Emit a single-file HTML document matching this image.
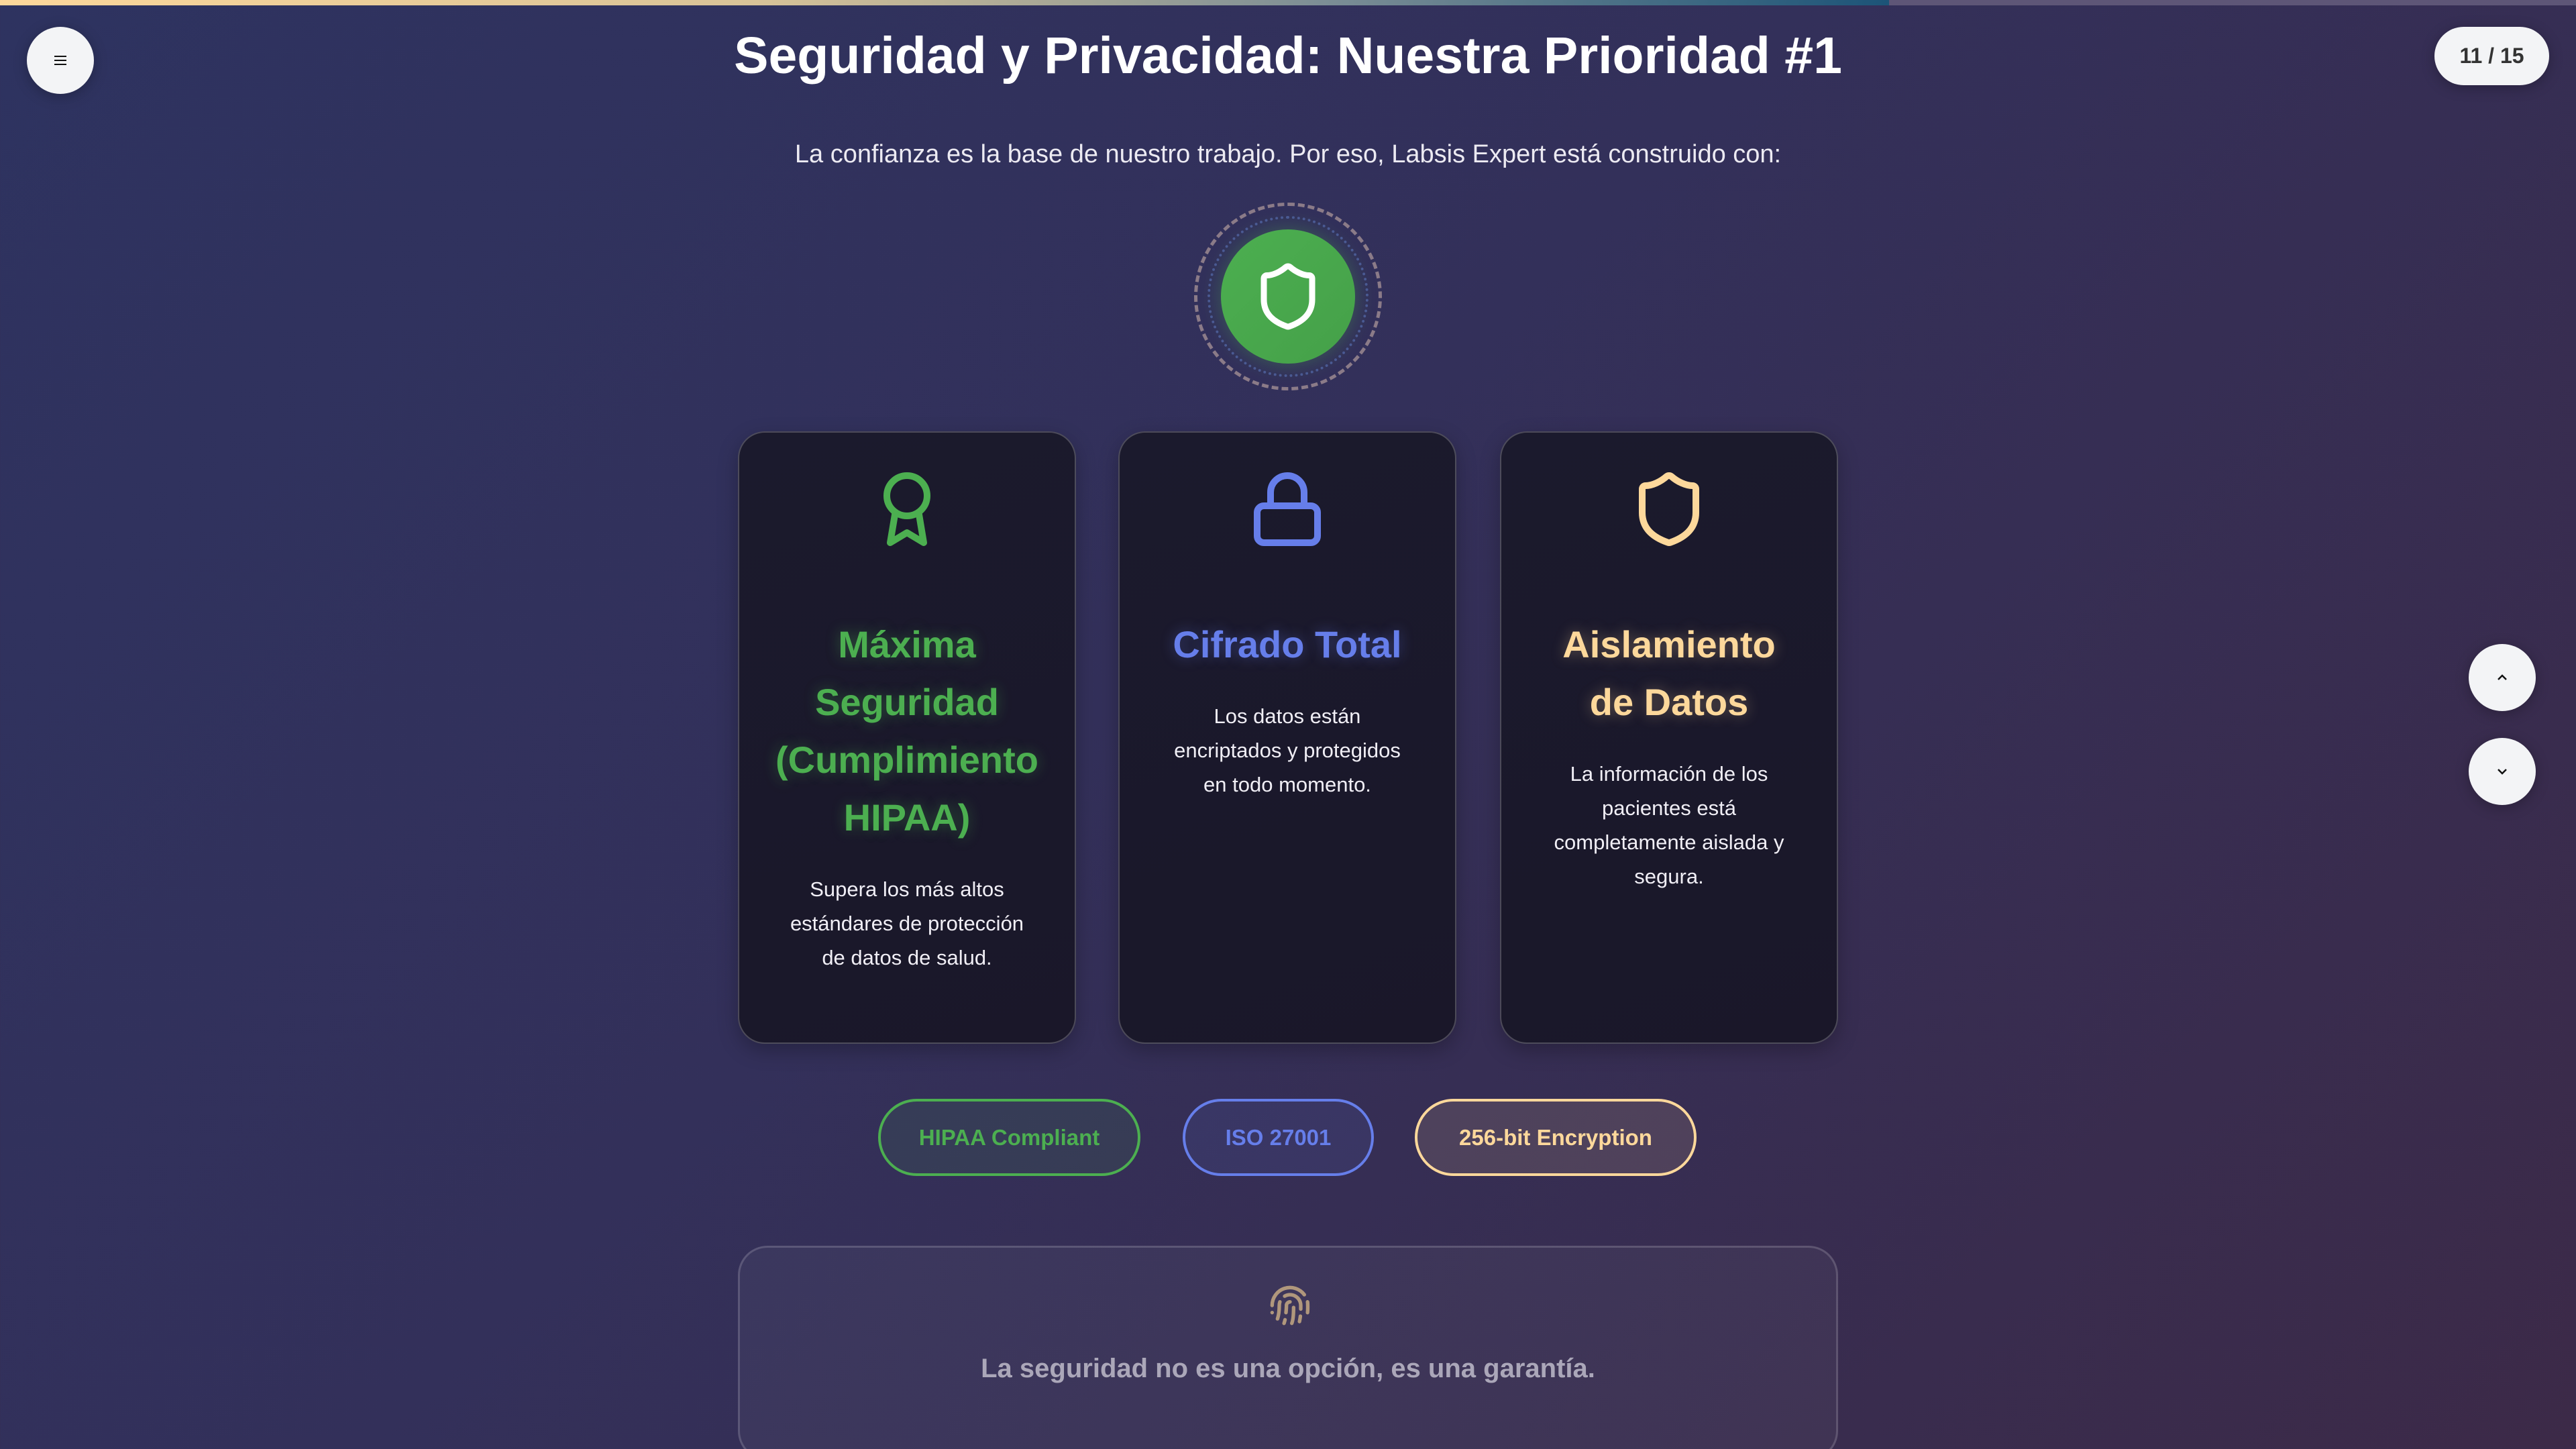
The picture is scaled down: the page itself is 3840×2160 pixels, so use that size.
<!DOCTYPE html>
<html><head><meta charset="utf-8"><style>
*{margin:0;padding:0;box-sizing:border-box}
html,body{width:3840px;height:2160px;overflow:hidden}
body{background:linear-gradient(135deg,#2e3360 0%,#33305a 45%,#3c2a48 100%);font-family:"Liberation Sans",sans-serif;position:relative;color:#fff}
.track{position:absolute;left:0;top:0;width:3840px;height:8px;background:#5e5677}
.bar{position:absolute;left:0;top:0;width:2816px;height:8px;background:linear-gradient(90deg,#fdd89b 0%,#d8c398 40%,#7c8e95 70%,#1c5478 100%)}
.menu{position:absolute;left:40px;top:40px;width:100px;height:100px;border-radius:50%;background:#f3f4f6;box-shadow:0 4px 20px rgba(0,0,0,.25);display:flex;align-items:center;justify-content:center}
.menu i{display:block;width:18px;height:14px;border-top:2px solid #111;border-bottom:2px solid #111;position:relative}
.menu i:after{content:"";position:absolute;left:0;right:0;top:4px;border-top:2px solid #111}
.count{position:absolute;left:3629px;top:40px;width:171px;height:87px;border-radius:44px;background:#f3f4f6;color:#333;font-size:32px;font-weight:bold;display:flex;align-items:center;justify-content:center;box-shadow:0 4px 20px rgba(0,0,0,.25)}
.nav{position:absolute;left:3680px;width:100px;height:100px;border-radius:50%;background:#f3f4f6;display:flex;align-items:center;justify-content:center;box-shadow:0 4px 20px rgba(0,0,0,.25)}
h1{position:absolute;left:0;width:3840px;top:38px;text-align:center;font-size:77px;font-weight:bold;line-height:90px}
.sub{position:absolute;left:0;width:3840px;top:207px;text-align:center;font-size:38px;line-height:46px;color:#eceaf2}
.ring1{position:absolute;left:1780px;top:302px;width:280px;height:280px;border-radius:50%;border:5px dashed #8b7b88}
.ring2{position:absolute;left:1800px;top:322px;width:240px;height:240px;border-radius:50%;border:4px dotted #4b5896}
.core{position:absolute;left:1820px;top:342px;width:200px;height:200px;border-radius:50%;background:linear-gradient(135deg,#4caf50,#45a049);box-shadow:0 0 30px rgba(76,175,80,.35);display:flex;align-items:center;justify-content:center}
.card{position:absolute;top:643px;width:504px;height:913px;border-radius:40px;background:linear-gradient(160deg,#1b1a2d,#1a1729);border:2px solid rgba(255,255,255,.22);box-shadow:0 10px 30px rgba(0,0,0,.25);text-align:center;padding:54px 20px 0;white-space:nowrap}
.card svg{display:block;margin:0 auto 99px}
.card h3{font-size:56px;line-height:86px;font-weight:bold;margin-bottom:38px}
.card p{font-size:31px;line-height:51px;color:#f0eef5}
.badge{position:absolute;top:1638px;height:115px;border-radius:58px;border:4px solid;display:flex;align-items:center;justify-content:center;font-size:33px;font-weight:bold}
.quote{position:absolute;left:1100px;top:1857px;width:1640px;height:320px;border-radius:44px;border:3px solid rgba(255,255,255,.16);background:rgba(255,255,255,.04);text-align:center}
</style></head><body>
<div class="track"></div><div class="bar"></div>
<div class="menu"><i></i></div>
<div class="count">11 / 15</div>
<div class="nav" style="top:960px"><svg width="24" height="24" viewBox="0 0 24 24" fill="none" stroke="#111" stroke-width="2.5"><path d="M6 15l6-6 6 6"/></svg></div>
<div class="nav" style="top:1100px"><svg width="24" height="24" viewBox="0 0 24 24" fill="none" stroke="#111" stroke-width="2.5"><path d="M6 9l6 6 6-6"/></svg></div>
<h1>Seguridad y Privacidad: Nuestra Prioridad #1</h1>
<div class="sub">La confianza es la base de nuestro trabajo. Por eso, Labsis Expert está construido con:</div>
<div class="ring1"></div><div class="ring2"></div>
<div class="core"><svg width="108" height="108" viewBox="0 0 24 24" fill="none" stroke="#fff" stroke-width="2" stroke-linecap="round" stroke-linejoin="round"><path d="M20 13c0 5-3.5 7.5-7.66 8.95a1 1 0 0 1-.67-.01C7.5 20.5 4 18 4 13V6a1 1 0 0 1 1-1c2 0 4.5-1.2 6.24-2.72a1.17 1.17 0 0 1 1.52 0C14.51 3.81 17 5 19 5a1 1 0 0 1 1 1z"/></svg></div>

<div class="card" style="left:1100px">
<svg width="120" height="120" viewBox="0 0 24 24" fill="none" stroke="#4caf50" stroke-width="2" stroke-linecap="round" stroke-linejoin="round"><circle cx="12" cy="8" r="6"/><path d="M15.477 12.89 17 22l-5-3-5 3 1.523-9.11"/></svg>
<h3 style="color:#4caf50;text-shadow:0 0 20px rgba(76,175,80,.4)">Máxima<br>Seguridad<br>(Cumplimiento<br>HIPAA)</h3>
<p>Supera los más altos<br>estándares de protección<br>de datos de salud.</p></div>

<div class="card" style="left:1667px">
<svg width="120" height="120" viewBox="0 0 24 24" fill="none" stroke="#667eea" stroke-width="2" stroke-linecap="round" stroke-linejoin="round"><rect x="3" y="11" width="18" height="11" rx="2"/><path d="M7 11V7a5 5 0 0 1 10 0v4"/></svg>
<h3 style="color:#667eea;text-shadow:0 0 20px rgba(102,126,234,.4)">Cifrado Total</h3>
<p>Los datos están<br>encriptados y protegidos<br>en todo momento.</p></div>

<div class="card" style="left:2236px">
<svg width="120" height="120" viewBox="0 0 24 24" fill="none" stroke="#fdd89b" stroke-width="2" stroke-linecap="round" stroke-linejoin="round"><path d="M20 13c0 5-3.5 7.5-7.66 8.95a1 1 0 0 1-.67-.01C7.5 20.5 4 18 4 13V6a1 1 0 0 1 1-1c2 0 4.5-1.2 6.24-2.72a1.17 1.17 0 0 1 1.52 0C14.51 3.81 17 5 19 5a1 1 0 0 1 1 1z"/></svg>
<h3 style="color:#fdd89b;text-shadow:0 0 20px rgba(253,216,155,.35)">Aislamiento<br>de Datos</h3>
<p>La información de los<br>pacientes está<br>completamente aislada y<br>segura.</p></div>

<div class="badge" style="left:1309px;width:391px;border-color:#4caf50;color:#4caf50;background:rgba(76,175,80,.1)">HIPAA Compliant</div>
<div class="badge" style="left:1763px;width:285px;border-color:#667eea;color:#667eea;background:rgba(102,126,234,.1)">ISO 27001</div>
<div class="badge" style="left:2109px;width:420px;border-color:#fdd89b;color:#fdd89b;background:rgba(253,216,155,.12)">256-bit Encryption</div>

<div class="quote">
<svg style="position:absolute;left:788px;top:54px" width="64" height="64" viewBox="0 0 24 24" fill="none" stroke="#b0977c" stroke-width="2" stroke-linecap="round" stroke-linejoin="round"><path d="M12 10a2 2 0 0 0-2 2c0 1.02-.1 2.51-.26 4"/><path d="M14 13.12c0 2.38 0 6.38-1 8.88"/><path d="M17.29 21.02c.12-.6.43-2.3.5-3.02"/><path d="M2 12a10 10 0 0 1 18-6"/><path d="M2 16h.01"/><path d="M21.8 16c.2-2 .131-5.354 0-6"/><path d="M5 19.5C5.5 18 6 15 6 12a6 6 0 0 1 .34-2"/><path d="M8.65 22c.21-.66.45-1.32.57-2"/><path d="M9 6.8a6 6 0 0 1 9 5.2v2"/></svg>
<div style="position:absolute;left:0;width:100%;top:150px;font-size:40px;font-weight:bold;color:#aba7b9;line-height:60px">La seguridad no es una opción, es una garantía.</div>
</div>
</body></html>
